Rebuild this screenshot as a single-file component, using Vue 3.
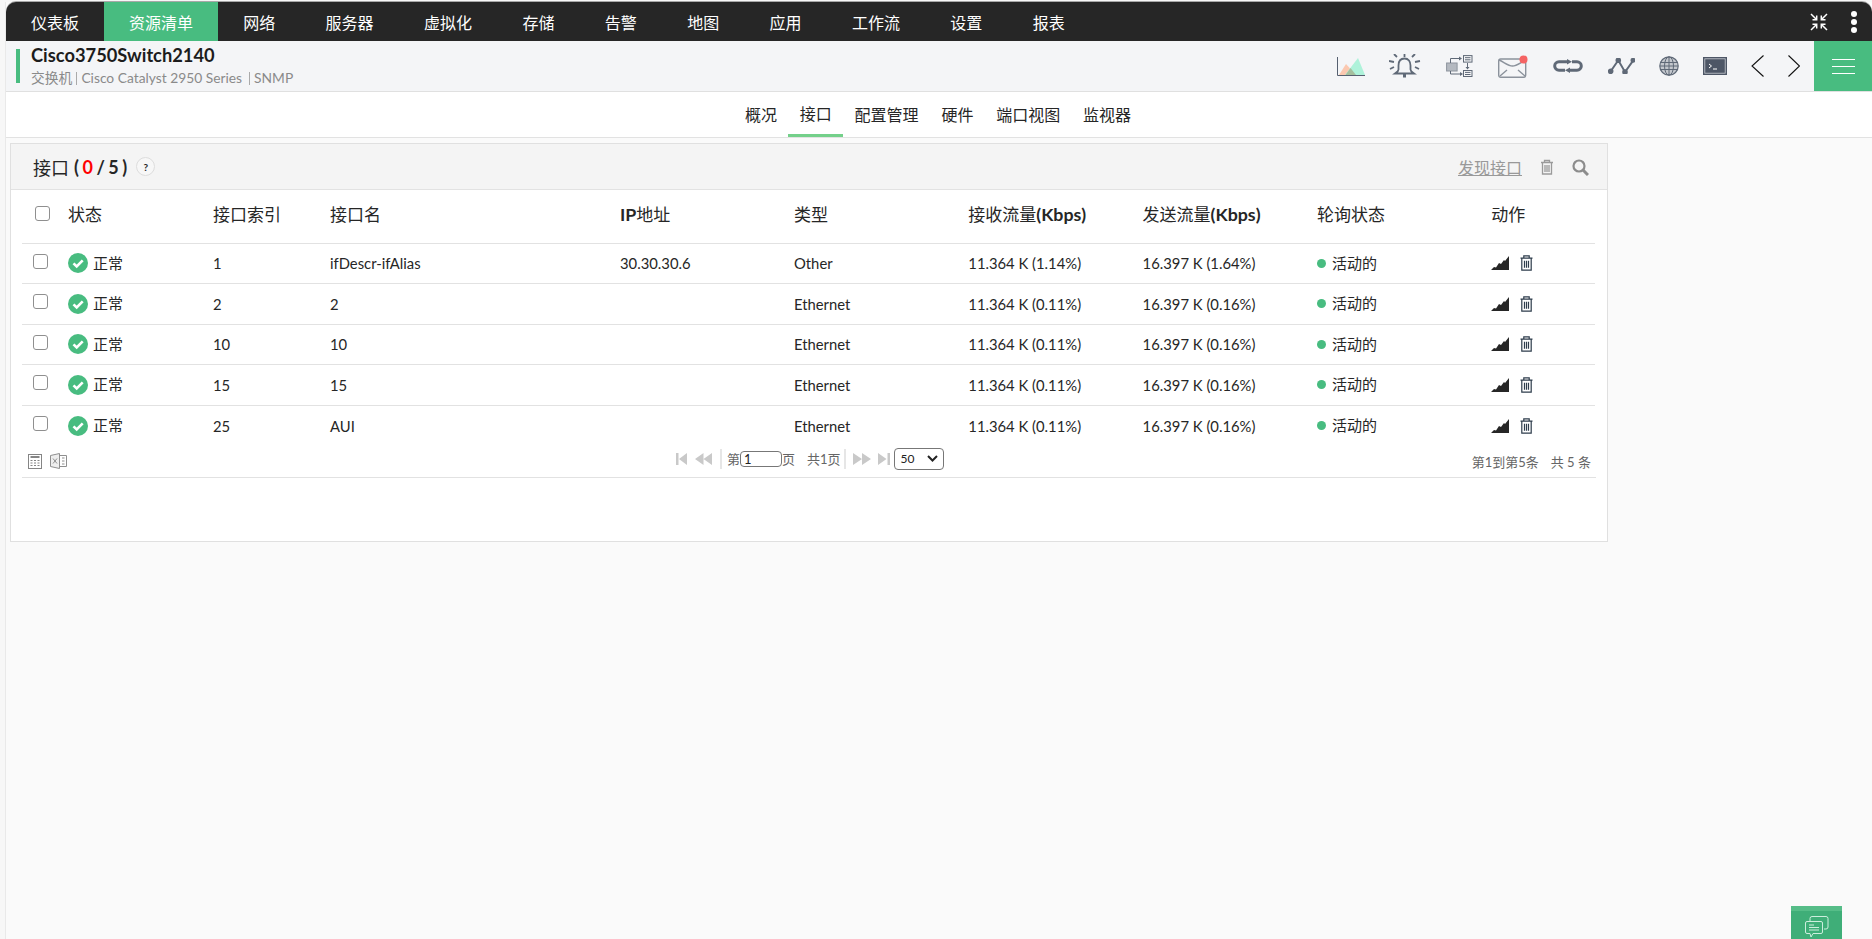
<template>
  <div class="page">
    <div class="main">
      <nav class="topnav">
        <a v-for="item in menu" :key="item" class="nav-item" :class="{ active: item === '资源清单' }">{{ item }}</a>
        <div class="nav-right">
          <svg width="18" height="18" viewBox="0 0 18 18" fill="none" stroke="#fff" stroke-width="1.5">
            <path d="M1 1l5 5M2.500 6.700h4.200V2.500" />
            <path d="M17 1l-5 5M15.500 6.700h-4.200V2.500" />
            <path d="M1 17l5-5M2.500 11.300h4.200v4.200" />
            <path d="M17 17l-5-5M15.500 11.300h-4.200v4.200" />
          </svg>
          <div class="dots"><i></i><i></i><i></i></div>
        </div>
      </nav>

      <header class="devicebar">
        <div class="accent"></div>
        <div class="device">
          <div class="device-name">Cisco3750Switch2140</div>
          <div class="device-meta">
            <span>交换机</span><span class="sep"></span><span>Cisco Catalyst 2950 Series</span><span class="sep wide"></span><span>SNMP</span>
          </div>
        </div>
        <div class="tools">
          <svg width="28" height="19" viewBox="0 0 28 19">
            <polygon points="2,18 9,7 19,18" fill="#fbc8b0" />
            <polygon points="8,18 21,1 28,18" fill="#aef2da" />
            <polygon points="8.500,18 13.500,11 19,18" fill="#a5bf9e" />
            <path d="M.5 0v18.500H28" fill="none" stroke="#566070" />
          </svg>
          <svg width="33" height="24" viewBox="0 0 33 24" fill="none" stroke="#5f6977" stroke-width="1.800">
            <path d="M15.500 4.500c-4 0-6 3-6 7v4c0 2-2 3-3.500 4h19c-1.500-1-3.500-2-3.500-4v-4c0-4-2-7-6-7z" />
            <path d="M15.500 20v3.500" stroke-width="3" />
            <path d="M15.500 0v3M5 0l3 3M26 0l-3 3M0 7l5 1M31 7l-5 1M1 15l4-2M30 15l-4-2" />
          </svg>
          <svg width="28" height="22" viewBox="0 0 28 22" fill="none" stroke="#5f6977" stroke-width="1">
            <rect x=".6" y="8" width="10.500" height="8" fill="#b4b9c0" stroke="#8d949e" />
            <path d="M4.500 8V3.500h9M4.500 16v3h10" />
            <path d="M13 1.500l3 2-3 2zM14 17l3 2-3 2zM19.500 12l2 2.500 2-2.500z" fill="#5f6977" stroke="none" />
            <path d="M21.500 8v5" />
            <rect x="17.500" y=".6" width="8.500" height="6.500" />
            <path d="M19 2.700h5.500M19 4.800h5.500" />
            <rect x="17.500" y="15.500" width="8.500" height="6" />
            <path d="M19 17.400h5.500M19 19.500h5.500" />
          </svg>
          <svg width="30" height="23" viewBox="0 0 30 23" fill="none" stroke="#8b929c" stroke-width="1.400">
            <rect x=".7" y="4" width="27" height="18.300" rx="2" />
            <path d="M1 5c5 2 9 6 13.500 6S23 7 28 5M2 21l7-6M27 21l-7-6" />
            <circle cx="25.500" cy="4.500" r="4" fill="#f56464" stroke="none" />
          </svg>
          <svg width="32" height="14" viewBox="0 0 32 14" fill="none" stroke="#5f6977" stroke-width="3">
            <path d="M15 2.700H7a4.300 4.300 0 0 0 0 8.600h6M20 2.700h5a4.300 4.300 0 0 1 0 8.600h-7" />
            <path d="M15 0v5.500l5-2.800zM18 8.500v5.500l-5-2.700z" fill="#5f6977" stroke="none" />
          </svg>
          <svg width="27" height="16" viewBox="0 0 27 16" fill="#5f6977" stroke="#5f6977" stroke-width="2">
            <path d="M2.700 13.300l7.600-11L17 14l8.300-11.700" fill="none" />
            <circle cx="2.700" cy="13.300" r="1.800" />
            <circle cx="10.300" cy="2.300" r="1.800" />
            <circle cx="17" cy="14" r="1.800" />
            <circle cx="25" cy="2.300" r="1.500" />
          </svg>
          <svg width="20" height="20" viewBox="0 0 20 20" fill="none" stroke="#5f6977" stroke-width="1">
            <circle cx="10" cy="10" r="9.200" fill="#c3c7cd" stroke-width="1.200" />
            <ellipse cx="10" cy="10" rx="4.500" ry="9.200" />
            <path d="M10 1v18M1.500 6.500h17M1 10h18M1.500 13.500h17" />
          </svg>
          <svg width="24" height="18" viewBox="0 0 24 18" fill="#4d5666">
            <rect width="24" height="18" />
            <rect x="1.800" y="1.800" width="20.400" height="14.400" fill="#4d5666" stroke="#c8ccd2" stroke-width=".8" />
            <path d="M6 7l2.500 2L6 11M10 12h4" fill="none" stroke="#fff" stroke-width="1" />
          </svg>
          <svg width="13" height="22" viewBox="0 0 13 22" fill="none" stroke="#111" stroke-width="1.100">
            <path d="M12.500 .5L1 11l11.500 10.500" />
          </svg>
          <svg width="12" height="22" viewBox="0 0 12 22" fill="none" stroke="#111" stroke-width="1.100">
            <path d="M.5 .5L11.500 11 .5 21.500" />
          </svg>
        </div>
        <div class="burger"><i></i><i></i><i></i></div>
      </header>

      <div class="tabs">
        <a v-for="tab in tabs" :key="tab" class="tab" :class="{ current: tab === '接口' }">{{ tab }}</a>
      </div>

      <section class="panel">
        <div class="panel-head">
          <div class="panel-title">
            接口<span class="count">(<em>0</em>/<span>5</span>)</span>
            <span class="help">?</span>
          </div>
          <div class="panel-actions">
            <a class="discover">发现接口</a>
            <svg width="14" height="16" viewBox="0 0 14 16" fill="none" stroke="#9a9a9a" stroke-width="1.300">
              <path d="M1 3.500h12M4.500 3.500V1.500h5v2M2.500 3.500v11.500h9V3.500M5 6v7M7 6v7M9 6v7" />
            </svg>
            <svg width="17" height="17" viewBox="0 0 17 17" fill="none" stroke="#8c8c8c" stroke-width="2.200">
              <circle cx="7" cy="7" r="5.500" />
              <path d="M11 11l5 5" stroke-width="3" />
            </svg>
          </div>
        </div>

        <div class="panel-body">
          <table>
            <colgroup>
              <col class="c-check" /><col class="c-status" /><col class="c-index" /><col class="c-name" /><col class="c-ip" />
              <col class="c-flow" /><col class="c-flow" /><col class="c-flow" /><col class="c-flow" /><col />
            </colgroup>
            <thead>
              <tr>
                <th class="head-check"><span class="box"></span></th>
                <th>状态</th>
                <th>接口索引</th>
                <th>接口名</th>
                <th><b>IP</b>地址</th>
                <th>类型</th>
                <th>接收流量<b>(Kbps)</b></th>
                <th>发送流量<b>(Kbps)</b></th>
                <th>轮询状态</th>
                <th>动作</th>
              </tr>
            </thead>
            <tbody>
              <tr v-for="row in rows" :key="row.index">
                <td class="row-check"><span class="box"></span></td>
                <td>
                  <div class="status">
                    <svg width="20" height="20" viewBox="0 0 20 20">
                      <circle cx="10" cy="10" r="10" fill="#48bc80" />
                      <path d="M5.500 10.300l3.200 3.200 6-6.200" fill="none" stroke="#fff" stroke-width="2.600" />
                    </svg>
                    <span class="cjk">正常</span>
                  </div>
                </td>
                <td>{{ row.index }}</td>
                <td>{{ row.name }}</td>
                <td>{{ row.ip }}</td>
                <td>{{ row.type }}</td>
                <td>{{ row.rx }}</td>
                <td>{{ row.tx }}</td>
                <td>
                  <div class="poll"><i></i><span class="cjk">活动的</span></div>
                </td>
                <td>
                  <div class="row-actions">
                    <svg width="18" height="14" viewBox="0 0 18 14" fill="#262626">
                      <path d="M0 14l3-3 2 .5L8 7l2 1 3-4 1 1 4-5v14z" />
                    </svg>
                    <svg width="13" height="16" viewBox="0 0 13 16" fill="none" stroke="#2e3d4c" stroke-width="1.200">
                      <path d="M.5 3.200h12M3.800 3.200V.8h5.400v2.400M1.800 3.200v12h9.400v-12M4.500 5.800v7M6.500 5.800v7M8.500 5.800v7" />
                    </svg>
                  </div>
                </td>
              </tr>
            </tbody>
          </table>

          <div class="pager">
            <div class="exports">
              <svg width="14" height="15" viewBox="0 0 14 15" fill="none" stroke="#858585">
                <rect x=".5" y=".5" width="13" height="14" />
                <path d="M2.500 3h9" stroke-width="2" />
                <path d="M2.500 6.500h9M2.500 9h9M2.500 11.500h9" stroke-width="1.200" stroke-dasharray="2 1.500" />
              </svg>
              <svg width="17" height="16" viewBox="0 0 17 16" fill="none" stroke="#8f8f8f">
                <path d="M.5 2.500L9.500 .5v15l-9-2z" fill="#eee" />
                <path d="M9.500 2.500h7v11h-7M12 5h2.500M12 8h2.500M12 11h2.500M3 5.500l4 5M7 5.500l-4 5" />
              </svg>
            </div>
            <div class="pager-mid">
              <svg width="11" height="12" viewBox="0 0 11 12" fill="#c9c9c9"><path d="M0 0h2.500v12H0zM11 0v12L3 6z" /></svg>
              <svg class="pg-prev" width="17" height="12" viewBox="0 0 17 12" fill="#c9c9c9"><path d="M8.500 0v12L0 6zM17 0v12L8.500 6z" /></svg>
              <span class="pg-sep"></span>
              <span class="cjk">第</span>
              <span class="pg-input">1</span>
              <span class="cjk">页</span>
              <span class="cjk pg-total">共1页</span>
              <span class="pg-sep second"></span>
              <svg class="pg-next" width="18" height="12" viewBox="0 0 18 12" fill="#c9c9c9"><path d="M0 0v12l9-6zM9 0v12l9-6z" /></svg>
              <svg class="pg-last" width="12" height="12" viewBox="0 0 12 12" fill="#c9c9c9"><path d="M0 0v12l8.500-6zM9.500 0H12v12H9.500z" /></svg>
              <div class="pg-select">
                <span>50</span>
                <svg width="11" height="7" viewBox="0 0 11 7" fill="none" stroke="#222" stroke-width="2"><path d="M1 1l4.500 4.500L10 1" /></svg>
              </div>
            </div>
            <div class="pager-info">第1到第5条<span>共 5 条</span></div>
          </div>
        </div>
      </section>

      <div class="chat">
        <svg width="24" height="23" viewBox="0 0 24 23" fill="none" stroke="#cdeedd" stroke-width="1">
          <path d="M5 5V2.500a2 2 0 0 1 2-2h14a2 2 0 0 1 2 2V11a2 2 0 0 1-2 2h-2" />
          <path d="M2 5.500h14a1.500 1.500 0 0 1 1.500 1.500v9a1.500 1.500 0 0 1-1.500 1.500H8L6 21l-1-3.500H2A1.500 1.500 0 0 1 .5 16V7A1.500 1.500 0 0 1 2 5.500z" />
          <path d="M4 9h5M4 11.500h10M4 14h10" />
        </svg>
      </div>
    </div>
  </div>
</template>

<script setup>
const menu = ['仪表板', '资源清单', '网络', '服务器', '虚拟化', '存储', '告警', '地图', '应用', '工作流', '设置', '报表']
const tabs = ['概况', '接口', '配置管理', '硬件', '端口视图', '监视器']

const rows = [
  { index: 1, name: 'ifDescr-ifAlias', ip: '30.30.30.6', type: 'Other', rx: '11.364 K (1.14%)', tx: '16.397 K (1.64%)' },
  { index: 2, name: '2', ip: '', type: 'Ethernet', rx: '11.364 K (0.11%)', tx: '16.397 K (0.16%)' },
  { index: 10, name: '10', ip: '', type: 'Ethernet', rx: '11.364 K (0.11%)', tx: '16.397 K (0.16%)' },
  { index: 15, name: '15', ip: '', type: 'Ethernet', rx: '11.364 K (0.11%)', tx: '16.397 K (0.16%)' },
  { index: 25, name: 'AUI', ip: '', type: 'Ethernet', rx: '11.364 K (0.11%)', tx: '16.397 K (0.16%)' }
]
</script>

<style>
html, body {
  margin: 0;
  background: #f7f7f7;
}
</style>

<style scoped>
.page {
  height: 939px;
  overflow: hidden;
  padding: 2px 0 0 5px;
  box-sizing: border-box;
  font-family: Lato, "Noto Sans CJK SC", sans-serif;
  color: #262626;
}

.main {
  position: relative;
  height: 937px;
  background: #fafafa;
  border-left: 1px solid #e9e9e9;
}

.topnav {
  display: flex;
  height: 39px;
  background: #262626;
  border-radius: 10px 10px 0 0;
  box-shadow: 0 -1px 0 #a8a8a8;
}

.nav-item {
  display: flex;
  align-items: center;
  padding: 0 25.200px;
  color: #fff;
  font-size: 16px;
}

.nav-item:first-child {
  padding: 0 25px;
}

.nav-item.active {
  background: #48bc80;
  padding: 0 25px;
}

.nav-right {
  display: flex;
  align-items: center;
  margin-left: auto;
  padding-right: 15px;
}

.dots {
  display: flex;
  flex-direction: column;
  gap: 2px;
  margin-left: 23px;
}

.dots i {
  width: 6px;
  height: 6px;
  border-radius: 50%;
  background: #fff;
}

.devicebar {
  display: flex;
  height: 51px;
  box-sizing: border-box;
  background: #f4f5f7;
  border-bottom: 1px solid #e0e0e0;
}

.accent {
  width: 4px;
  height: 34px;
  margin: 8px 0 0 10px;
  background: #48bc80;
}

.device {
  margin-left: 11px;
}

.device-name {
  margin-top: 3px;
  font-size: 18.300px;
  font-weight: 700;
  line-height: 22px;
  color: #1c1c1c;
}

.device-meta {
  display: flex;
  align-items: center;
  margin-top: 3px;
  font-size: 13.800px;
  line-height: 18px;
  color: #8a8a8a;
}

.sep {
  width: 1px;
  height: 13px;
  margin: 0 4px;
  background: #aaa;
}

.sep.wide {
  margin-left: 7px;
}

.tools {
  display: flex;
  align-items: center;
  gap: 24px;
  margin-left: auto;
  padding-right: 14px;
}

.burger {
  display: flex;
  flex-direction: column;
  justify-content: center;
  align-items: center;
  gap: 6px;
  width: 58px;
  height: 50px;
  background: #48bc80;
}

.burger i {
  width: 23px;
  height: 1px;
  background: #fff;
}

.tabs {
  display: flex;
  justify-content: center;
  height: 45px;
  padding-right: 2px;
  background: #fff;
  border-bottom: 1px solid #e2e2e2;
}

.tab {
  display: flex;
  align-items: center;
  height: 45px;
  padding: 0 11.400px 2px;
  box-sizing: border-box;
  font-size: 16px;
  color: #262626;
}

.tab.current {
  border-bottom: 3px solid #74d08a;
  padding-bottom: 0;
}

.panel {
  width: 1598px;
  height: 399px;
  margin: 5px 0 0 4px;
  box-sizing: border-box;
  background: #fff;
  border: 1px solid #e0e0e0;
}

.panel-head {
  display: flex;
  align-items: center;
  justify-content: space-between;
  height: 46px;
  box-sizing: border-box;
  padding: 0 18px 0 22px;
  background: #f4f4f4;
  border-bottom: 1px solid #e2e2e2;
}

.panel-title {
  display: flex;
  align-items: center;
  font-size: 18px;
}

.count {
  display: flex;
  align-items: center;
  gap: 3.500px;
  margin-left: 5px;
  font-weight: 700;
}

.count em {
  font-style: normal;
  color: #f00;
}

.help {
  display: flex;
  align-items: center;
  justify-content: center;
  width: 17px;
  height: 17px;
  margin-left: 9px;
  border: 1px solid #ddd;
  border-radius: 50%;
  background: #f7f7f7;
  font-size: 10px;
  font-weight: 700;
}

.panel-actions {
  display: flex;
  align-items: center;
  gap: 18px;
  padding-top: 1px;
}

.discover {
  font-size: 16px;
  color: #999;
  text-decoration: underline;
}

.panel-body {
  padding: 0 11px;
}

table {
  width: 1573px;
  border-collapse: collapse;
  table-layout: fixed;
}

.c-check { width: 46px; }
.c-status { width: 145px; }
.c-index { width: 117px; }
.c-name { width: 290px; }
.c-ip { width: 174px; }
.c-flow { width: 174.300px; }

th {
  height: 53px;
  box-sizing: border-box;
  padding: 0 0 6px;
  text-align: left;
  font-size: 17px;
  font-weight: 400;
  border-bottom: 1px solid #e2e2e2;
}

th b {
  font-size: 17.800px;
  font-weight: 700;
}

td {
  height: 40.500px;
  box-sizing: border-box;
  padding: 0;
  font-size: 14.800px;
  border-bottom: 1px solid #e2e2e2;
}

tbody tr:last-child td {
  border-bottom: 0;
}

.box {
  display: block;
  width: 15px;
  height: 15px;
  box-sizing: border-box;
  background: #fff;
  border: 1px solid #8f8f8f;
  border-radius: 3px;
}

.head-check .box {
  margin-left: 13px;
}

.row-check .box {
  margin: -4px 0 0 11px;
}

.status {
  display: flex;
  align-items: center;
  gap: 5px;
}

.cjk {
  font-size: 15px;
}

.status .cjk,
.poll .cjk {
  margin-top: -2px;
}

.poll {
  display: flex;
  align-items: center;
  gap: 6px;
}

.poll i {
  width: 9px;
  height: 9px;
  border-radius: 50%;
  background: #48bc80;
}

.row-actions {
  display: flex;
  align-items: center;
  gap: 11px;
}

.pager {
  display: flex;
  align-items: center;
  justify-content: space-between;
  position: relative;
  height: 31px;
  border-bottom: 1px solid #e2e2e2;
  font-size: 13px;
  color: #666;
}

.exports {
  display: flex;
  align-items: center;
  gap: 8px;
  padding-left: 6px;
}

.pager-mid {
  position: absolute;
  left: 654px;
  top: 2px;
  display: flex;
  align-items: center;
  height: 22px;
}

.pager-mid .cjk {
  font-size: 13px;
}

.pg-prev {
  margin-left: 8px;
}

.pg-sep {
  width: 2px;
  height: 20px;
  margin: 0 5px 0 8px;
  background: #e6e6e6;
}

.pg-sep.second {
  margin: 0 5px 0 3px;
}

.pg-input {
  display: block;
  width: 42px;
  height: 16px;
  box-sizing: border-box;
  padding-left: 3px;
  line-height: 14px;
  font-size: 13px;
  color: #222;
  border: 1px solid #777;
  border-radius: 4px;
}

.pg-total {
  margin-left: 12px;
}

.pg-next {
  margin-left: 2px;
}

.pg-last {
  margin-left: 7px;
}

.pg-select {
  display: flex;
  align-items: center;
  justify-content: space-between;
  width: 50px;
  height: 22px;
  margin-left: 4px;
  padding: 0 5px 0 6px;
  box-sizing: border-box;
  font-size: 12px;
  color: #222;
  border: 1px solid #777;
  border-radius: 4px;
}

.pager-info {
  padding-right: 5px;
  color: #666;
}

.pager-info span {
  margin-left: 12px;
}

.chat {
  position: absolute;
  right: 30px;
  bottom: 0;
  display: flex;
  justify-content: center;
  width: 51px;
  height: 33px;
  padding-top: 5px;
  box-sizing: border-box;
  background: #3fae78;
  border-top: 5px solid #56bd88;
}
</style>
